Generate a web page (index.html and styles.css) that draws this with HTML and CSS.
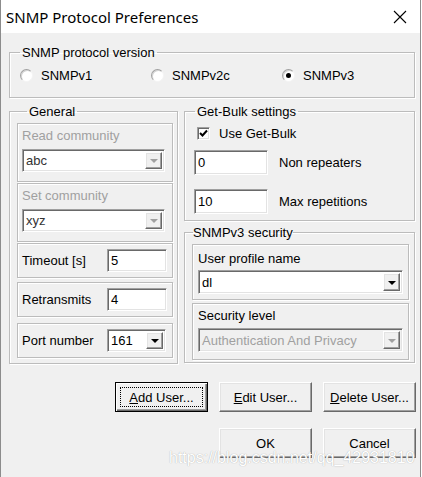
FILE: index.html
```html
<!DOCTYPE html>
<html>
<head>
    <meta charset="UTF-8">
    <title>SNMP Protocol Preferences</title>
    <link rel="stylesheet" href="styles.css">
</head>
<body>
    <div class="window">
        <div class="titlebar">
            <span class="title">SNMP Protocol Preferences</span>
            <svg class="close" width="14" height="14" viewBox="0 0 14 14">
                <path d="M1 1L13 13M13 1L1 13" stroke="#000" stroke-width="1.1" fill="none"/>
            </svg>
        </div>

        <div class="client">
            <fieldset class="group protocol">
                <legend>SNMP protocol version</legend>
                <div class="radios">
                    <label class="radio"><span class="dot"></span>SNMPv1</label>
                    <label class="radio"><span class="dot"></span>SNMPv2c</label>
                    <label class="radio"><span class="dot checked"></span>SNMPv3</label>
                </div>
            </fieldset>

            <div class="columns">
                <fieldset class="group general">
                    <legend>General</legend>
                    <div class="box community first">
                        <div class="caption disabled">Read community</div>
                        <div class="combo sunken">
                            <span class="value grey">abc</span>
                            <span class="drop raised"><span class="arrow grey"></span></span>
                        </div>
                    </div>
                    <div class="box community">
                        <div class="caption disabled">Set community</div>
                        <div class="combo sunken">
                            <span class="value grey">xyz</span>
                            <span class="drop raised"><span class="arrow grey"></span></span>
                        </div>
                    </div>
                    <div class="box line timeout">
                        <span class="line-label">Timeout [s]</span>
                        <div class="edit sunken small">5</div>
                    </div>
                    <div class="box line retransmits">
                        <span class="line-label">Retransmits</span>
                        <div class="edit sunken small">4</div>
                    </div>
                    <div class="box line port">
                        <span class="line-label">Port number</span>
                        <div class="combo sunken small">
                            <span class="value">161</span>
                            <span class="drop raised"><span class="arrow"></span></span>
                        </div>
                    </div>
                </fieldset>

                <div class="right-col">
                    <fieldset class="group bulk">
                        <legend>Get-Bulk settings</legend>
                        <label class="check-row">
                            <span class="checkbox sunken">
                                <svg width="9" height="9" viewBox="0 0 9 9"><path d="M1 4L3.5 6.5L8 1.5" stroke="#000" stroke-width="2" fill="none"/></svg>
                            </span>
                            Use Get-Bulk
                        </label>
                        <div class="bulk-row first">
                            <div class="edit sunken wide">0</div>
                            <span class="bulk-label">Non repeaters</span>
                        </div>
                        <div class="bulk-row">
                            <div class="edit sunken wide">10</div>
                            <span class="bulk-label">Max repetitions</span>
                        </div>
                    </fieldset>

                    <fieldset class="group security">
                        <legend>SNMPv3 security</legend>
                        <div class="box profile">
                            <div class="caption">User profile name</div>
                            <div class="combo sunken">
                                <span class="value">dl</span>
                                <span class="drop raised"><span class="arrow"></span></span>
                            </div>
                        </div>
                        <div class="box level">
                            <div class="caption">Security level</div>
                            <div class="combo sunken off">
                                <span class="value disabled">Authentication And Privacy</span>
                                <span class="drop raised"><span class="arrow grey"></span></span>
                            </div>
                        </div>
                    </fieldset>
                </div>
            </div>

            <div class="buttons">
                <button class="btn default"><span class="focus"><u>A</u>dd User...</span></button>
                <button class="btn"><u>E</u>dit User...</button>
                <button class="btn"><u>D</u>elete User...</button>
            </div>
            <div class="buttons second">
                <button class="btn">OK</button>
                <button class="btn">Cancel</button>
            </div>
        </div>

        <div class="watermark">https://blog.csdn.net/qq_42931810</div>
    </div>
</body>
</html>
```

FILE: styles.css
```css
body {
    margin: 0;
    background: #ffffff;
    font-family: 'Liberation Sans', Arial, sans-serif;
    font-size: 13px;
    color: #000;
}
.window {
    position: relative;
    width: 421px;
    height: 477px;
    box-sizing: border-box;
    border-left: 1px solid #8c8c8c;
    border-right: 1px solid #8c8c8c;
    background: #f0f0f0;
    overflow: hidden;
}
.titlebar {
    height: 33px;
    background: #fff;
    display: flex;
    align-items: center;
    padding-left: 5px;
}
.title {
    font-family: 'Noto Sans', sans-serif;
    font-size: 15px;
    line-height: 20px;
}
.close {
    margin-left: auto;
    margin-right: 13px;
}
.client {
    padding: 12px 4px 0 8px;
}

/* etched group boxes */
.group {
    margin: 0;
    padding: 0;
    border: 1px solid #bcbcbc;
    box-shadow: inset 1px 1px 0 #fff, 1px 1px 0 #fff;
    box-sizing: border-box;
    min-width: 0;
}
.group legend {
    padding: 0 2px;
    margin-left: 10px;
    line-height: 15px;
}
.protocol {
    width: 406px;
    height: 53px;
}
.radios {
    display: flex;
    margin-top: 5px;
    padding-left: 10px;
    height: 20px;
    align-items: center;
}
.radio {
    width: 131px;
    display: flex;
    align-items: center;
}
.dot {
    width: 11px;
    height: 11px;
    border-radius: 50%;
    background: #fff;
    border: 1px solid;
    border-color: #a0a0a0 #f4f4f4 #f4f4f4 #a0a0a0;
    box-shadow: inset 1px 1px 0 #d4d4d4;
    margin-right: 8px;
    position: relative;
}
.dot.checked::after {
    content: '';
    position: absolute;
    left: 3px;
    top: 3px;
    width: 5px;
    height: 5px;
    border-radius: 50%;
    background: #000;
}

.columns {
    display: flex;
    margin-top: 6px;
    gap: 6px;
}
.general {
    width: 169px;
    height: 260px;
    padding: 0 4px 0 7px;
}
.right-col {
    width: 231px;
    display: flex;
    flex-direction: column;
}

.box {
    border: 1px solid #bcbcbc;
    box-shadow: inset 1px 1px 0 #fff, 1px 1px 0 #fff;
    box-sizing: border-box;
}
.community {
    height: 59px;
    margin-top: 1px;
    padding: 4px 0 0 4px;
}
.community.first {
    margin-top: 4px;
}
.caption {
    line-height: 15px;
}
.disabled {
    color: #a0a0a0;
}
.community .combo {
    margin-top: 6px;
    width: 143px;
    height: 23px;
}
.line {
    height: 35px;
    display: flex;
    align-items: center;
    padding-left: 4px;
}
.timeout { margin-top: 1px; }
.retransmits { margin-top: 4px; }
.port { margin-top: 6px; }
.line-label {
    width: 85px;
}

/* sunken fields */
.sunken {
    border: 1px solid;
    border-color: #a0a0a0 #fff #fff #a0a0a0;
    box-shadow: inset 1px 1px 0 #696969, inset -1px -1px 0 #e3e3e3;
    background: #fff;
    box-sizing: border-box;
}
.edit {
    display: flex;
    align-items: center;
    padding-left: 3px;
}
.edit.small {
    width: 60px;
    height: 23px;
}
.edit.wide {
    width: 74px;
    height: 25px;
}
.combo {
    display: flex;
    align-items: center;
    padding: 2px;
}
.combo.small {
    width: 59px;
    height: 23px;
}
.combo.off {
    background: #f0f0f0;
}
.value {
    flex: 1;
    padding-left: 1px;
    white-space: nowrap;
}
.value.grey {
    color: #333;
}
.drop {
    width: 17px;
    align-self: stretch;
    display: flex;
    align-items: center;
    justify-content: center;
    background: #f0f0f0;
}
.raised {
    border: 1px solid;
    border-color: #fff #696969 #696969 #fff;
    box-shadow: inset -1px -1px 0 #a0a0a0, inset 1px 1px 0 #e3e3e3;
    box-sizing: border-box;
}
.arrow {
    width: 0;
    height: 0;
    border-left: 4px solid transparent;
    border-right: 4px solid transparent;
    border-top: 4px solid #000;
    margin-top: 1px;
}
.arrow.grey {
    border-top-color: #a0a0a0;
}

/* get-bulk */
.bulk {
    height: 117px;
}
.check-row {
    display: flex;
    align-items: center;
    margin-top: 7px;
    padding-left: 12px;
    line-height: 15px;
}
.checkbox {
    width: 13px;
    height: 13px;
    display: flex;
    align-items: center;
    justify-content: center;
    margin-right: 9px;
}
.bulk-row {
    display: flex;
    align-items: center;
    padding-left: 9px;
    margin-top: 14px;
}
.bulk-row.first {
    margin-top: 9px;
}
.bulk-label {
    margin-left: 11px;
}

/* snmpv3 */
.security {
    margin-top: 4px;
    height: 138px;
}
.security legend {
    padding: 0;
    margin-left: 8px;
}
.profile {
    margin: 4px 5px 0 7px;
    height: 56px;
    padding: 6px 0 0 5px;
}
.level {
    margin: 3px 5px 0 7px;
    height: 57px;
    padding: 4px 0 0 5px;
}
.profile .combo,
.level .combo {
    width: 205px;
    height: 24px;
    margin-top: 4px;
}
.level .combo {
    margin-top: 5px;
}

/* buttons */
.buttons {
    display: flex;
    justify-content: flex-end;
    gap: 11px;
    margin-top: 18px;
}
.buttons.second {
    margin-top: 16px;
}
.btn {
    width: 93px;
    height: 30px;
    padding: 0;
    font-family: 'Liberation Sans', Arial, sans-serif;
    font-size: 13px;
    color: #000;
    background: #f0f0f0;
    border: 1px solid;
    border-color: #fff #696969 #696969 #fff;
    box-shadow: inset -1px -1px 0 #a0a0a0, inset 1px 1px 0 #e3e3e3;
}
.btn.default {
    border: 1px solid #000;
    box-shadow: inset 1px 1px 0 #fff, inset -1px -1px 0 #696969, inset -2px -2px 0 #a0a0a0;
    display: flex;
    padding: 4px;
}
.focus {
    flex: 1;
    display: flex;
    align-items: center;
    justify-content: center;
    border: 1px dotted #000;
}
.watermark {
    position: absolute;
    left: 168px;
    top: 449px;
    font-size: 16px;
    color: #fff;
    text-shadow: 0 0 1px #9a9a9a;
    white-space: nowrap;
}
```
